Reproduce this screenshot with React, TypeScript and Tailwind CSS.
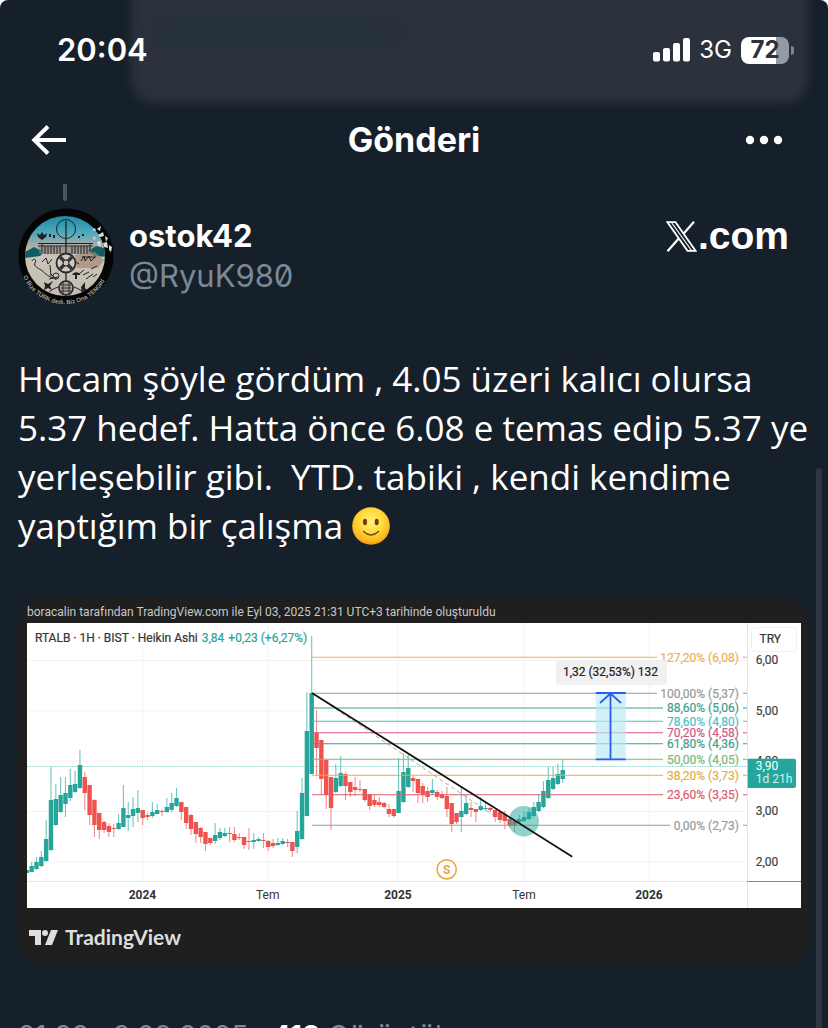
import React from "react";

type Candle = [number, number, number, number, 0 | 1];

// wick top, body top, body bottom, wick bottom, rising
const candles: Candle[] = [
  [247, 247, 250, 250, 1], [239, 243, 249, 249, 1], [234, 239, 246, 247, 1], [228, 234, 243, 244, 1],
  [197, 216, 238, 239, 1], [144, 177, 227, 228, 1], [161, 176, 202, 203, 1], [154, 172, 189, 190, 1],
  [154, 170, 181, 194, 1], [146, 162, 175, 178, 1], [148, 161, 169, 170, 1], [127, 142, 165, 166, 1],
  [149, 154, 170, 187, 0], [162, 162, 192, 202, 0], [176, 177, 202, 214, 0], [190, 190, 207, 216, 0],
  [198, 199, 207, 210, 0], [200, 203, 209, 214, 0], [201, 205, 206, 214, 0], [191, 200, 206, 207, 1],
  [162, 185, 204, 204, 1], [179, 192, 195, 208, 1], [174, 186, 193, 204, 1], [167, 185, 190, 199, 1],
  [187, 187, 195, 202, 0], [190, 192, 194, 197, 0], [179, 189, 193, 195, 1], [181, 187, 191, 191, 1],
  [186, 188, 189, 193, 0], [175, 184, 189, 190, 1], [170, 180, 187, 189, 1], [165, 175, 183, 184, 1],
  [179, 179, 189, 197, 0], [184, 184, 200, 206, 0], [191, 192, 206, 212, 0], [199, 199, 211, 220, 0],
  [204, 205, 214, 220, 0], [209, 209, 221, 228, 0], [215, 215, 220, 222, 0], [200, 212, 218, 221, 1],
  [205, 209, 215, 217, 1], [205, 210, 213, 214, 1], [204, 210, 211, 219, 0], [204, 211, 217, 219, 0],
  [210, 214, 215, 217, 0], [214, 214, 222, 226, 0], [205, 218, 219, 227, 0], [210, 217, 219, 226, 1],
  [214, 216, 218, 219, 1], [210, 217, 218, 225, 0], [217, 218, 224, 228, 0], [216, 220, 223, 225, 0],
  [215, 220, 222, 223, 1], [215, 218, 221, 222, 1], [216, 219, 220, 224, 0], [219, 219, 228, 234, 0],
  [188, 208, 224, 230, 1], [155, 170, 216, 217, 1], [69, 108, 193, 193, 1], [13, 70, 151, 151, 1],
  [87, 110, 125, 153, 0], [117, 117, 156, 172, 0], [136, 137, 172, 186, 0], [154, 154, 185, 207, 0],
  [141, 155, 169, 170, 1], [133, 150, 163, 164, 1], [149, 151, 163, 177, 0], [159, 159, 169, 174, 0],
  [154, 164, 167, 173, 0], [157, 166, 167, 169, 0], [166, 166, 177, 179, 0], [171, 171, 183, 187, 0],
  [172, 177, 182, 184, 0], [174, 179, 182, 184, 0], [179, 180, 184, 185, 0], [181, 186, 191, 194, 0],
  [186, 186, 193, 195, 0], [135, 168, 190, 190, 1], [130, 149, 179, 180, 1], [132, 145, 164, 165, 1],
  [153, 155, 158, 169, 0], [156, 156, 170, 180, 0], [160, 163, 172, 180, 0], [164, 168, 174, 179, 0],
  [156, 167, 170, 172, 1], [167, 169, 174, 177, 0], [168, 171, 175, 176, 0], [164, 173, 186, 194, 0],
  [180, 180, 201, 209, 0], [190, 190, 199, 201, 0], [164, 188, 194, 209, 1], [172, 180, 191, 192, 1],
  [179, 185, 187, 194, 0], [186, 186, 189, 199, 0], [174, 183, 187, 188, 1], [179, 185, 186, 188, 1],
  [184, 185, 187, 189, 0], [187, 187, 194, 199, 0], [188, 189, 197, 200, 0], [188, 191, 198, 206, 0],
  [195, 196, 203, 205, 0], [198, 198, 203, 209, 0], [192, 196, 199, 200, 1], [188, 194, 198, 199, 1],
  [185, 189, 196, 197, 1], [179, 184, 193, 194, 1], [171, 179, 188, 189, 1], [158, 168, 184, 185, 1],
  [144, 157, 175, 176, 1], [144, 155, 166, 167, 1], [141, 151, 161, 162, 1], [137, 147, 156, 160, 1],
];

const levels = [
  { y: 34.3, end: 630, color: "#f0b04f", label: "127,20% (6,08)" },
  { y: 70.3, end: 630, color: "#999999", label: "100,00% (5,37)" },
  { y: 85, end: 636, color: "#3fa08c", label: "88,60% (5,06)" },
  { y: 98.3, end: 636, color: "#4fc0c8", label: "78,60% (4,80)" },
  { y: 109.7, end: 636, color: "#d4588a", label: "70,20% (4,58)" },
  { y: 120.7, end: 636, color: "#3fa08c", label: "61,80% (4,36)" },
  { y: 136.3, end: 636, color: "#79b97c", label: "50,00% (4,05)" },
  { y: 152.3, end: 636, color: "#e8ae3c", label: "38,20% (3,73)" },
  { y: 171.7, end: 636, color: "#d9606e", label: "23,60% (3,35)" },
  { y: 202.3, end: 643, color: "#9a9a9a", label: "0,00% (2,73)" },
];

const months = [
  { x: 115.5, label: "2024", year: true },
  { x: 240.7, label: "Tem", year: false },
  { x: 371, label: "2025", year: true },
  { x: 497, label: "Tem", year: false },
  { x: 622, label: "2026", year: true },
];

const prices = [
  { y: 37, label: "6,00" },
  { y: 87.5, label: "5,00" },
  { y: 137.5, label: "4,00" },
  { y: 188, label: "3,00" },
  { y: 238.5, label: "2,00" },
];

function PriceChart() {
  return (
    <svg viewBox="0 0 774 285" className="block w-full bg-white font-['Roboto',sans-serif] text-[12px]" role="img" aria-label="RTALB">
      {prices.map((p) => (
        <path key={p.label} d={`M0 ${p.y + 0.5}H720`} stroke="#f3f3f3" />
      ))}
      {months.map((m) => (
        <path key={m.x} d={`M${m.x} 0V258`} stroke="#f3f3f3" />
      ))}
      <path d="M0 258.5H720M720.5 0V285" stroke="#e6e6e6" fill="none" />
      <path d="M720 258.5H774" stroke="#888888" />
      <path d="M0 143.5H720" stroke="#26a69a" strokeOpacity=".5" strokeDasharray="1.5 1" />
      {candles.map(([wt, bt, bb, wb, up], i) => {
        const x = -0.16 + i * 4.828;
        const color = up ? "#26a69a" : "#ef5350";
        return (
          <g key={i}>
            <path d={`M${x} ${wt}V${wb}`} stroke={color} strokeOpacity=".65" strokeWidth="1.1" />
            <rect x={x - 2.2} y={bt} width="4.4" height={bb - bt} fill={color} />
          </g>
        );
      })}
      {levels.map((l) => (
        <g key={l.label}>
          <path d={`M285 ${l.y}H${l.end}M716 ${l.y}H720`} stroke={l.color} strokeWidth="1.1" />
          <text x="712" y={l.y + 4.3} textAnchor="end" fill={l.color} stroke={l.color} strokeWidth=".2">{l.label}</text>
        </g>
      ))}
      <circle cx="496.7" cy="198.3" r="15.3" fill="#26a69a" fillOpacity=".5" />
      <path d="M285 70L466 192" stroke="#888888" strokeOpacity=".8" strokeWidth=".9" strokeDasharray="4 3" />
      <path d="M285 70L545.3 233.7" stroke="#111111" strokeWidth="1.8" />
      <circle cx="419.7" cy="246.3" r="9.6" fill="#ffffff" stroke="#eba63c" strokeWidth="1.6" />
      <text x="419.7" y="250.5" textAnchor="middle" fill="#eba63c" fontWeight="700">S</text>
      <rect x="568.7" y="70" width="30" height="66" fill="#b8e9f3" fillOpacity=".65" />
      <path d="M568.7 70H598.7M568.7 136.3H598.7M583.5 136V71M573 80L583.5 70.5L594 80" fill="none" stroke="#2b5cf0" strokeWidth="1.8" />
      <rect x="529" y="37" width="111" height="25" rx="3" fill="#f1f1f2" />
      <text x="583.5" y="52.7" textAnchor="middle" fill="#222222" stroke="#222222" strokeWidth=".2">1,32 (32,53%) 132</text>
      <text x="8" y="19" fill="#333333" stroke="#333333" strokeWidth=".2">
        RTALB · 1H · BIST · Heikin Ashi
        <tspan dx="4" fill="#26a69a" stroke="#26a69a">3,84</tspan>
        <tspan dx="4" fill="#26a69a" stroke="#26a69a">+0,23 (+6,27%)</tspan>
      </text>
      {prices.map((p) => (
        <text key={p.label} x="728.7" y={p.y + 4.3} fill="#444444" stroke="#444444" strokeWidth=".2">{p.label}</text>
      ))}
      <rect x="724.5" y="4.5" width="45" height="24" rx="3" fill="#ffffff" stroke="#f0f0f0" />
      <text x="732.5" y="20.3" fill="#333333" stroke="#333333" strokeWidth=".2">TRY</text>
      <path d="M720.7 135.7H767q2 0 2 2V163q0 2-2 2H720.7z" fill="#26a69a" />
      <text x="728.7" y="147" fill="#ffffff">3,90</text>
      <text x="728.7" y="160" fill="#d5efec">1d 21h</text>
      {months.map((m) => (
        <text key={m.x} x={m.x} y="276.3" textAnchor="middle" fill="#333333" fontWeight={m.year ? 700 : 400}>{m.label}</text>
      ))}
    </svg>
  );
}

function Avatar() {
  return (
    <svg viewBox="0 0 96 96" className="size-24 shrink-0" role="img" aria-label="ostok42">
      <defs>
        <linearGradient id="sky" x1="0" y1="0" x2="0" y2="1">
          <stop offset="0" stopColor="#1d8aa8" />
          <stop offset=".22" stopColor="#4faabd" />
          <stop offset=".38" stopColor="#b5aca2" />
          <stop offset=".5" stopColor="#cbc3b8" />
          <stop offset="1" stopColor="#c4beb2" />
        </linearGradient>
        <clipPath id="disc"><circle cx="47" cy="48" r="40" /></clipPath>
        <path id="rim" d="M3.6 64A45.5 45.5 0 0 0 92 58" />
      </defs>
      <circle cx="48" cy="48" r="47.5" fill="#050505" />
      <circle cx="47" cy="48" r="40" fill="url(#sky)" />
      <g clipPath="url(#disc)">
        <path d="M7 44l9-5 10 5-4 4-15 2zM70 43l8-5 12 3v8l-14-1z" fill="#0d5d62" />
        <path d="M57 47l20-3 9 8-6 8H59z" fill="#a48972" fillOpacity=".7" />
        <path d="M21 39h53v7H21z" fill="#7f7d78" fillOpacity=".55" />
        <g fill="none" stroke="#222222" strokeWidth="1">
          <path d="M20 35.5H75M20 38H75" strokeWidth="1.2" />
          <path d="M24 35v8M27 38v8M30 38v8M33 38v8M36 38v8M39 38v8M42 38v8M54 38v8M57 38v8M60 38v8M63 38v8M66 38v8M69 38v8M72 35v8" />
          <circle cx="48" cy="21" r="9.5" />
          <path d="M48 13V90" strokeWidth="1.3" />
          <path d="M26 96C26 72 70 72 70 96" />
          <path d="M14 53c2-4 5-1 3 2s3 5 6 7 6 6 12 8M24 54l4-4 2 6 4-5M32 57l1 11M55 52l6 4M63 53l3-5 1 5 4-5 2 5 4-4M64 49h14" />
          <path d="M61 66l5-4M65 67l6-3M68 71l7-5M73 61l6-3M75 69l4-3M31 71l9-2M33 66l5 6" />
        </g>
        <circle cx="48" cy="55" r="9.5" fill="#d0c9bf" stroke="#292929" strokeWidth="1.8" />
        <path d="M42 49l12 12M54 49L42 61" stroke="#383838" strokeWidth="3.5" />
        <circle cx="48" cy="55" r="3" fill="#cac2b5" stroke="#292929" />
        <circle cx="38" cy="68" r="3" fill="none" stroke="#292929" />
        <circle cx="48" cy="80" r="7" fill="#a8a298" stroke="#222222" strokeWidth="1.5" />
        <path d="M43 77h10M43 80h10M43 83h10M45 74v12M51 74v12" stroke="#333333" />
        <path d="M19 25l3 2 2-3 2 3 3-2-1 4-4 3-4-3zM26 74l4 2 5-3-3 5 2 4-4-2-4 2 1-4zM63 79l4-5v6l3 3-6 2zM54 67c2-4 8-3 8 0zM57 67h2v4h-2zM31 26h2v3h-2zM35 27h2v3h-2zM60 28h2v2h-2zM64 26h2v2h-2z" fill="#222222" />
      </g>
      <path d="M74 22l3-2 1 3zM79 21l4-3-1 5zM80 27l5-3 1 4-4 1zM75 28l3 2-2 2zM87 28l3 2-2 4zM85 35l4-1 1 6-4-1zM79 34l3-1 1 4-3 1zM91 37l3 2-1 5-2-2z" fill="#dddddd" />
      <text className="font-['Liberation_Sans',sans-serif] text-[6px] font-bold" fill="#a9a295">
        <textPath href="#rim" startOffset="4%">O Bize TÜRK dedi, Biz Ona TENGRİ</textPath>
      </text>
    </svg>
  );
}

function Smile() {
  return (
    <svg viewBox="0 0 38 38" className="inline-block size-[38px] align-[-6px]" role="img" aria-label="🙂">
      <defs>
        <radialGradient id="face" cx=".5" cy=".38" r=".65">
          <stop offset="0" stopColor="#fff27a" />
          <stop offset=".5" stopColor="#ffd93b" />
          <stop offset=".82" stopColor="#fdb51f" />
          <stop offset="1" stopColor="#e88a0c" />
        </radialGradient>
      </defs>
      <circle cx="19" cy="19" r="18.8" fill="url(#face)" />
      <ellipse cx="13" cy="15" rx="2" ry="3.2" fill="#6b3d0d" />
      <ellipse cx="24.7" cy="15" rx="2" ry="3.2" fill="#6b3d0d" />
      <path d="M11.5 24.5Q19 31.5 26.5 24.5" fill="none" stroke="#7a450f" strokeWidth="1.4" strokeLinecap="round" />
    </svg>
  );
}

function StatusBar() {
  return (
    <div className="flex h-[100px] items-center justify-between pr-[34px] pl-[57px]">
      <time className="text-[31px] font-semibold">20:04</time>
      <div className="flex items-center gap-[9px]">
        <svg viewBox="0 0 37 24" className="h-6 w-[37px]" fill="#ffffff" aria-hidden="true">
          <rect y="14" width="7" height="9.5" rx="2" />
          <rect x="10" y="10" width="7" height="13.5" rx="2" />
          <rect x="20" y="5" width="7" height="18.5" rx="2" />
          <rect x="30" width="7" height="23.5" rx="2" />
        </svg>
        <span className="text-2xl">3G</span>
        <div className="flex items-center gap-[2px]">
          <span className="flex h-[27px] w-12 items-center justify-center rounded-lg bg-[linear-gradient(to_right,#fff_73%,#949a9f_73%)] text-2xl font-bold text-[#2b323d]">72</span>
          <span className="h-[9px] w-[3px] rounded-r-full bg-[#80868d]" />
        </div>
      </div>
    </div>
  );
}

export default function App() {
  return (
    <div className="h-screen overflow-hidden bg-white">
      <div className="relative h-full overflow-hidden rounded-t-lg bg-[#16202a] font-['Inter',sans-serif] text-white">
        <div className="absolute inset-x-0 top-0 h-[183px] overflow-hidden" aria-hidden="true">
          <div className="absolute -top-8 right-[20px] left-[131px] h-[135px] rounded-3xl bg-[#2b323d] blur-[5px]" />
          <div className="absolute top-6 left-[155px] h-4 w-[245px] rounded-full bg-[#23303a] blur-[6px]" />
        </div>
        <header className="relative h-[184px]">
          <StatusBar />
          <div className="grid grid-cols-[1fr_auto_1fr] items-center px-[31px]">
            <button type="button" aria-label="Geri" className="justify-self-start">
              <svg viewBox="0 0 36 30" className="h-[30px] w-9" fill="none" stroke="#ffffff" strokeWidth="3.9" aria-hidden="true">
                <path d="M35 15H3M17 1.5L3.2 15L17 28.5" />
              </svg>
            </button>
            <h1 className="text-[34px] leading-20 font-bold">Gönderi</h1>
            <button type="button" aria-label="Daha fazla" className="justify-self-end pr-[14px]">
              <svg viewBox="0 0 38 10" className="h-[10px] w-[38px]" fill="#ffffff" aria-hidden="true">
                <circle cx="5" cy="5" r="4.2" />
                <circle cx="19" cy="5" r="4.2" />
                <circle cx="33" cy="5" r="4.2" />
              </svg>
            </button>
          </div>
        </header>

        <main className="relative px-[18px]">
          <div className="ml-[45px] h-[17px] w-1 rounded-b-full bg-[#445566]" />
          <div className="mt-[7px] flex items-start gap-[15px]">
            <Avatar />
            <div className="flex-1 pt-2">
              <p className="text-[31px] leading-10 font-bold">ostok42</p>
              <a href="#profile" className="block text-[31px] leading-10 text-[#7b8896] slashed-zero">@RyuK980</a>
            </div>
            <p className="flex items-center gap-[1px] pt-2 pr-[21px] font-['Liberation_Sans',sans-serif] text-[39px] leading-10 font-bold">
              <svg viewBox="0 0 31 31" className="size-[31px]" fill="none" stroke="#ffffff" role="img" aria-label="X">
                <path d="M1.5 1.2H9.5L29.5 29.8H21.5Z" strokeWidth="1.8" />
                <path d="M5.5 1.5L25.5 29.5" strokeWidth="1.2" />
                <path d="M28 .8L17.5 12.8M12.5 17.8L1.5 30.2" strokeWidth="2.2" />
              </svg>
              .com
            </p>
          </div>

          <p className="mt-[50px] -mr-3 font-['Open_Sans',sans-serif] text-[35px] leading-[49px]">
            Hocam şöyle gördüm , 4.05 üzeri kalıcı olursa<br />
            5.37 hedef. Hatta önce 6.08 e temas edip 5.37 ye<br />
            yerleşebilir gibi.&nbsp; YTD. tabiki , kendi kendime<br />
            yaptığım bir çalışma <Smile />
          </p>

          <figure className="mt-[47px] rounded-[30px] bg-[#1f1f1f] px-[9px] pb-[13px] font-['Roboto',sans-serif]">
            <figcaption className="pt-[4px] text-[12px] leading-[22px] text-[#c8c8c8]">
              boracalin tarafından TradingView.com ile Eyl 03, 2025 21:31 UTC+3 tarihinde oluşturuldu
            </figcaption>
            <PriceChart />
            <div className="flex items-center gap-[7px] pt-[13px] pl-[2px] text-[#dedede]">
              <svg viewBox="0 0 29 15" className="h-[15px] w-[29px]" fill="currentColor" aria-hidden="true">
                <path d="M0 0H12V15H6V6H0Z" />
                <circle cx="16" cy="3" r="3" />
                <path d="M22 0H29L23 15H16Z" />
              </svg>
              <span className="font-['Lato',sans-serif] text-[21px] leading-8 font-bold">TradingView</span>
            </div>
          </figure>

          <p className="mt-[50px] text-[28px] leading-10 whitespace-nowrap text-[#7b8896]">
            21:33 · 3.09.2025 · <strong className="text-white">418</strong> Görüntülenme
          </p>
        </main>
        <div className="absolute top-[468px] right-[6px] bottom-0 w-[6px] rounded-t-full bg-[#2e3742]" aria-hidden="true" />
      </div>
    </div>
  );
}
